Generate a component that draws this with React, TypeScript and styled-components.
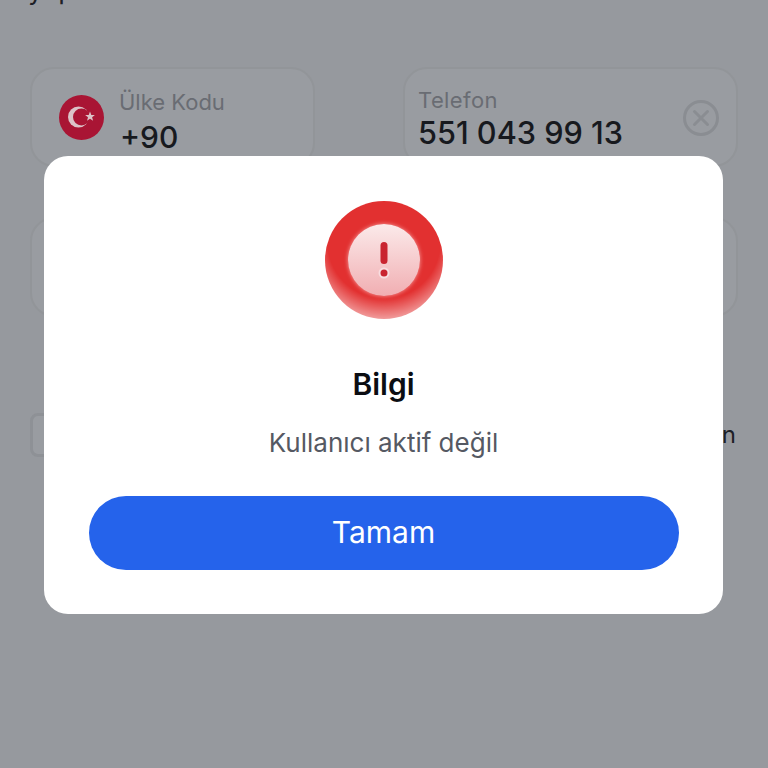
import React from "react";
import styled, { createGlobalStyle } from "styled-components";

const GlobalStyle = createGlobalStyle`
  html, body {
    margin: 0;
    padding: 0;
    background: #96999e;
  }
  body {
    font-family: Inter, "Noto Sans", "Liberation Sans", sans-serif;
  }
`;

const Page = styled.div`
  position: relative;
  width: 768px;
  height: 768px;
  overflow: hidden;
  background: #96999e;
`;

const Content = styled.div`
  display: flex;
  flex-direction: column;
  padding: 0 30px;
`;

const Heading = styled.div`
  height: 92px;
  margin-top: -25px;
  margin-left: -2px;
  font-size: 27px;
  line-height: 30px;
  color: #1d2026;
`;

const FieldRow = styled.div`
  display: flex;
  justify-content: space-between;
`;

const Field = styled.div<{ $width: number }>`
  box-sizing: border-box;
  display: flex;
  align-items: center;
  width: ${(p) => p.$width}px;
  height: 100px;
  border: 2px solid #929599;
  border-radius: 24px;
  background: #999ca1;
`;

const CountryField = styled(Field)`
  padding: 1px 0 0 27px;
  gap: 15px;
`;

const PhoneField = styled(Field)`
  justify-content: space-between;
  padding: 2px 16px 0 13px;
`;

const FieldText = styled.div`
  display: flex;
  flex-direction: column;
`;

const CountryText = styled(FieldText)`
  padding-top: 7px;
  gap: 2px;
`;

const FieldLabel = styled.span<{ $spacing?: number }>`
  font-size: 22px;
  line-height: 30px;
  letter-spacing: ${(p) => p.$spacing ?? 0}px;
  color: #696c73;
`;

const FieldValue = styled.span`
  font-size: 30.7px;
  line-height: 36px;
  font-weight: 500;
  color: #17191e;
`;

const CountryValue = styled(FieldValue)`
  font-size: 30px;
  margin-left: 1px;
`;

const AddressField = styled(Field)`
  margin-top: 50px;
`;

const ConsentRow = styled.div`
  display: flex;
  align-items: center;
  justify-content: space-between;
  margin-top: 96px;
  height: 44px;
`;

const Checkbox = styled.div`
  box-sizing: border-box;
  width: 40px;
  height: 44px;
  border: 3px solid #8e9196;
  border-radius: 8px;
  background: #999ca1;
`;

const ConsentText = styled.span`
  font-size: 24px;
  line-height: 30px;
  color: #1d2026;
  margin-right: 2px;
`;

const Overlay = styled.div`
  position: absolute;
  inset: 0;
  display: flex;
  align-items: center;
  justify-content: center;
  padding: 2px 1px 0 0;
`;

const Modal = styled.div`
  box-sizing: border-box;
  width: 679px;
  height: 458px;
  display: flex;
  flex-direction: column;
  align-items: center;
  padding: 45px 45px 0;
  background: #ffffff;
  border-radius: 24px;
`;

const AlertBadge = styled.div`
  display: flex;
  align-items: center;
  justify-content: center;
  width: 118px;
  height: 118px;
  border-radius: 50%;
  background:
    radial-gradient(78px circle at 50% 35%, rgba(255, 255, 255, 0) 72%, rgba(255, 255, 255, 0.55) 100%),
    #e23030;
`;

const AlertCore = styled.div`
  display: flex;
  align-items: center;
  justify-content: center;
  width: 72px;
  height: 72px;
  border-radius: 50%;
  background: linear-gradient(180deg, #fbeaea 0%, #f1aeb2 100%);
  box-shadow: 0 0 4px rgba(255, 210, 210, 0.7);
`;

const Title = styled.h2`
  margin: 47px 0 0;
  font-size: 30px;
  line-height: 36px;
  font-weight: 600;
  color: #0b0d12;
`;

const Message = styled.p`
  margin: 24px 0 0;
  font-size: 26px;
  line-height: 34px;
  font-weight: 400;
  color: #555963;
`;

const ConfirmButton = styled.button`
  width: 590px;
  height: 74px;
  margin-top: 36px;
  padding-bottom: 3px;
  border: 0;
  border-radius: 37px;
  background: #2563eb;
  color: #ffffff;
  font-family: inherit;
  font-size: 30px;
  font-weight: 400;
`;

const TurkeyFlag = () => (
  <svg width="45" height="45" viewBox="0 0 45 45">
    <circle cx="22.5" cy="22.5" r="22.5" fill="#a91534" />
    <circle cx="19.5" cy="22" r="10.5" fill="#dcc3c8" />
    <circle cx="22.5" cy="22" r="8.5" fill="#a91534" />
    <path
      d="M31 16.5l1.3 3.4 3.6.1-2.8 2.3 1 3.5-3.1-2-3 2 1-3.5-2.9-2.3 3.6-.1z"
      fill="#dcc3c8"
    />
  </svg>
);

const ClearIcon = () => (
  <svg width="38" height="38" viewBox="0 0 38 38" fill="none" stroke="#8a8d92" strokeWidth="3">
    <circle cx="19" cy="19" r="16.5" />
    <path d="M12.5 12.5l13 13M25.5 12.5l-13 13" strokeLinecap="round" />
  </svg>
);

const AlertMark = () => (
  <svg width="14" height="38" viewBox="0 0 14 38">
    <rect x="3.5" y="1" width="7" height="22" rx="3.5" fill="#c92430" />
    <circle cx="7" cy="32" r="5.5" fill="#f8dde0" />
    <circle cx="7" cy="32" r="3.5" fill="#c92430" />
  </svg>
);

export default function App() {
  return (
    <Page>
      <GlobalStyle />
      <Content>
        <Heading>yapın</Heading>
        <FieldRow>
          <CountryField $width={285}>
            <TurkeyFlag />
            <CountryText>
              <FieldLabel>Ülke Kodu</FieldLabel>
              <CountryValue>+90</CountryValue>
            </CountryText>
          </CountryField>
          <PhoneField $width={335}>
            <FieldText>
              <FieldLabel $spacing={0.4}>Telefon</FieldLabel>
              <FieldValue>551 043 99 13</FieldValue>
            </FieldText>
            <ClearIcon />
          </PhoneField>
        </FieldRow>
        <AddressField $width={708} />
        <ConsentRow>
          <Checkbox />
          <ConsentText>n</ConsentText>
        </ConsentRow>
      </Content>
      <Overlay>
        <Modal>
          <AlertBadge>
            <AlertCore>
              <AlertMark />
            </AlertCore>
          </AlertBadge>
          <Title>Bilgi</Title>
          <Message>Kullanıcı aktif değil</Message>
          <ConfirmButton>Tamam</ConfirmButton>
        </Modal>
      </Overlay>
    </Page>
  );
}
